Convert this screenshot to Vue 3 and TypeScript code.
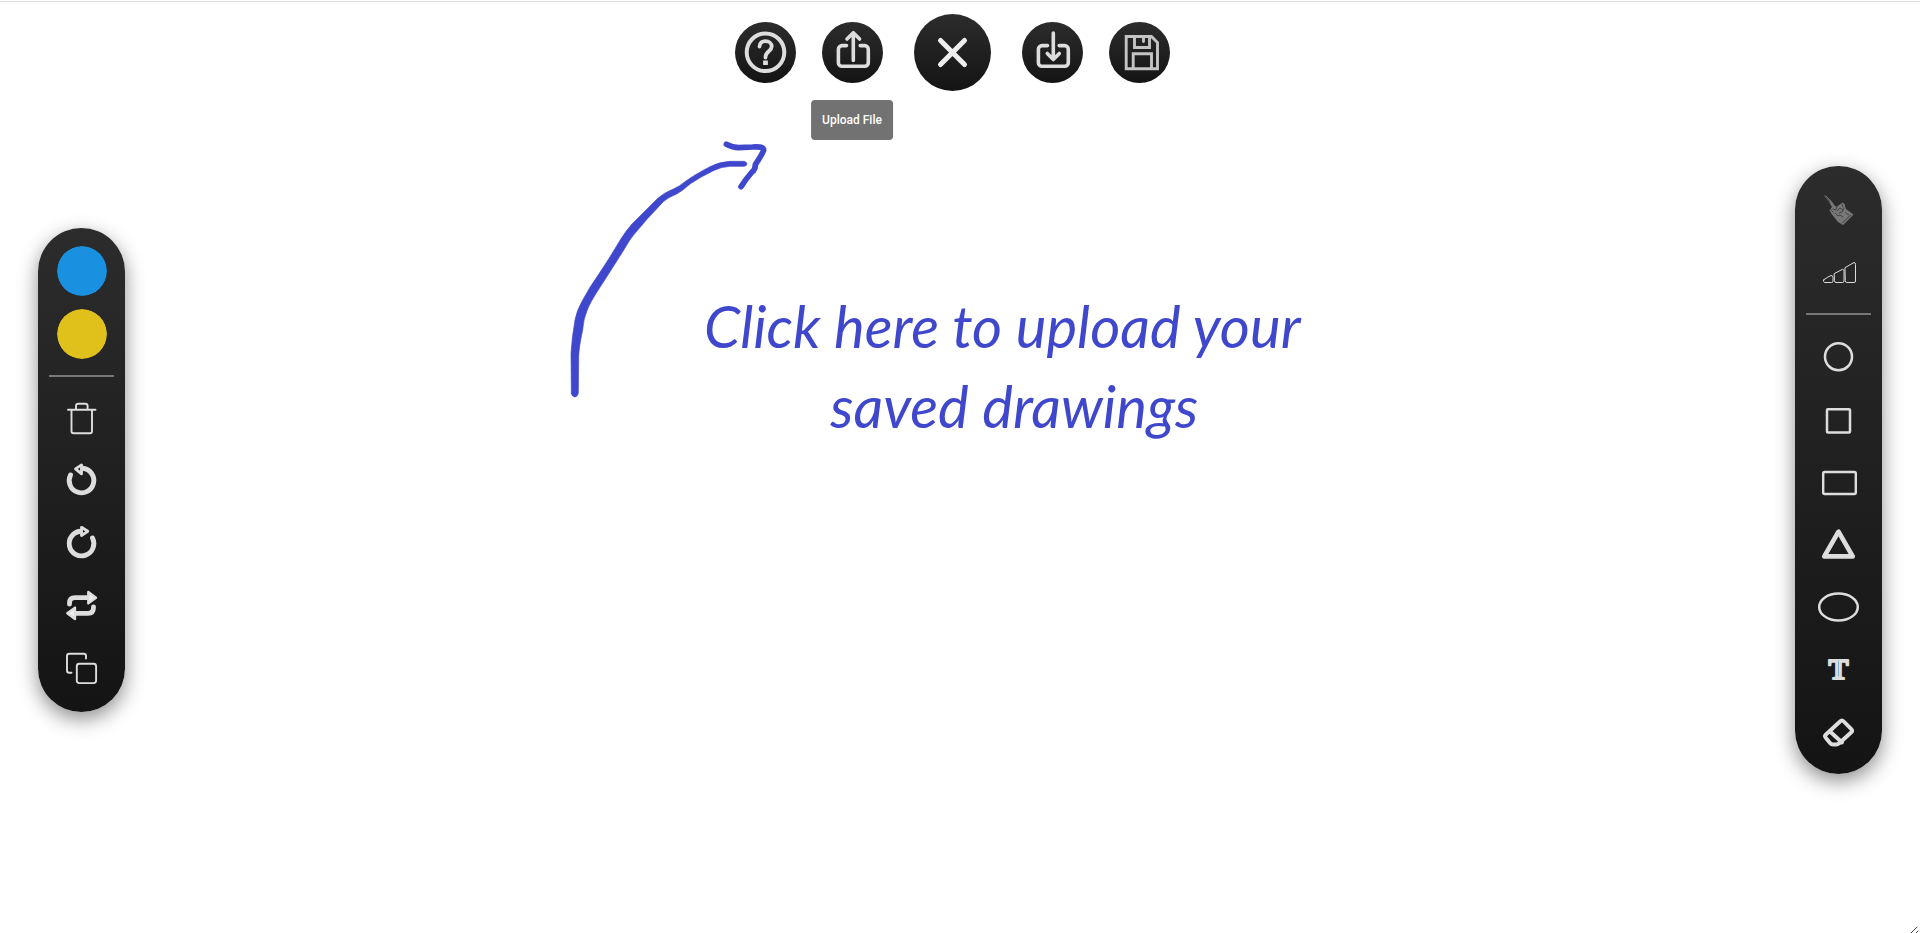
<script setup lang="ts">
import { ref } from 'vue'

const stroke = ref('#1a90e0')
const fill = ref('#e0c01a')
const selected = ref('upload')
</script>

<template>
  <main class="board">
    <svg class="arrow" viewBox="0 0 750 870" aria-hidden="true">
      <path class="ink" d="M64 820 L63 700 Q66 650 75 600 Q80 572 97 542 Q118 502 148 460 Q180 412 212 358 Q228 332 246 312 L322 236 Q340 219 372 206 Q390 198 405 185 Q430 166 480 140 Q510 125 540 124 L583 124 Q591 127 591 132 Q590 138 583 139 L540 139 Q515 140 490 152 Q450 171 420 192 Q400 211 380 222 Q355 232 340 245 Q290 296 250 346 Q240 358 225 384 Q190 440 150 502 Q118 550 110 575 Q101 595 98 630 Q87 680 86 710 L85 820 Q82 831 74 831 Q66 830 64 820Z" />
      <path class="ink-line" d="M529 73 Q548 83 566 83 L608 81 Q642 78 641 91 Q636 104 616 134 Q616 149 606 156 Q587 178 573 200" />
    </svg>
    <p class="hint"><span>Click here to upload your</span><span class="second">saved drawings</span></p>

    <nav class="top" aria-label="Drawing actions">
      <button class="round" aria-label="Help">
        <svg viewBox="0 0 61 61" stroke-width="4"><circle cx="30.5" cy="30.3" r="18.8" /><path d="M24.500 24.500c0-3.400 2.600-5.300 6-5.300s6.200 2 6.200 5.300c0 4.700-6.200 5-6.200 10.500v.5" stroke-width="3.800" /><path d="M30.500 38.500v4.500" stroke-width="4.800" stroke-linecap="butt" /></svg>
      </button>
      <div class="tip-anchor">
        <button class="round" aria-label="Upload" aria-describedby="upload-tip" @click="selected = 'upload'">
          <svg viewBox="0 0 61 61" stroke-width="3.600"><path d="M31.300 38.500V11M25 17l6.300-6.300L37.600 17M24.500 23.600H20a3.600 3.600 0 0 0-3.600 3.600v13.500a3.600 3.600 0 0 0 3.600 3.600h22.700a3.600 3.600 0 0 0 3.600-3.600V27.200a3.600 3.600 0 0 0-3.600-3.600h-4.500" /></svg>
        </button>
        <span v-if="selected === 'upload'" id="upload-tip" class="tip" role="tooltip">Upload File</span>
      </div>
      <button class="round large" aria-label="Close">
        <svg viewBox="0 0 77 77" stroke-width="5" class="bright"><path d="M26.500 26.500l24 24M50.500 26.500l-24 24" /></svg>
      </button>
      <button class="round" aria-label="Download">
        <svg viewBox="0 0 61 61" stroke-width="3.600"><path d="M31.300 11v26.500M25.300 31.500l6 6 6-6M25.500 23.600H20a3.600 3.600 0 0 0-3.600 3.600v13.500a3.600 3.600 0 0 0 3.600 3.600h22.700a3.600 3.600 0 0 0 3.600-3.600V27.200a3.600 3.600 0 0 0-3.600-3.600h-5.500" /></svg>
      </button>
      <button class="round" aria-label="Save">
        <svg viewBox="0 0 61 61" stroke-width="2.900" class="dim"><path d="M17.200 14.500h25.300l6 6v26.200H17.200zM25.500 14.500v11h15v-11M34.500 16v3.500M24.200 46V31.800h18.300V46" /></svg>
      </button>
    </nav>

    <aside class="pill left" aria-label="Colours and history">
      <div class="swatch"><input v-model="stroke" type="color" aria-label="Stroke colour" /></div>
      <div class="swatch next"><input v-model="fill" type="color" aria-label="Fill colour" /></div>
      <hr />
      <div class="tools">
        <button aria-label="Delete"><svg viewBox="0 0 65 50" stroke-width="1.900"><path d="M19 15.700h27.500M27 15v-3q0-2.300 2.300-2.300h7q2.300 0 2.300 2.300v3M22.500 16v21.200q0 2 2 2h16.500q2 0 2-2V16" /></svg></button>
        <button aria-label="Undo"><svg viewBox="0 0 65 50" stroke-width="4.900"><path d="M34 12.300A12.300 12.300 0 1 1 21.500 19" /><path d="M26.500 12.900l6-4v9z" stroke-width="2.800" /></svg></button>
        <button aria-label="Redo"><svg viewBox="0 0 65 50" stroke-width="4.900"><path d="M31.500 13.300A12.300 12.300 0 1 0 43.500 20" /><path d="M32.500 9.300l6.300 4-6.300 4.200z" stroke-width="2.800" /></svg></button>
        <button aria-label="Swap"><svg viewBox="0 0 65 50" stroke-width="4.800"><path d="M38 17.700H26q-5.500 0-5.500 5.500v1M27 33.300h12q5.500 0 5.500-5.500v-1" /><path class="solid" d="M39.300 12l7.700 5.700-7.700 5.700zM26 27.600v11.400l-7.700-5.700z" stroke-width="2.400" /></svg></button>
        <button aria-label="Duplicate"><svg viewBox="0 0 65 50" stroke-width="1.900"><rect x="27.800" y="21.800" width="19.300" height="19.300" rx="2.500" /><path d="M37 16.500V14q0-2.300-2.300-2.300H20.300Q18 11.700 18 14v14.500q0 2.300 2.300 2.300h2.200" /></svg></button>
      </div>
    </aside>

    <aside class="pill right" aria-label="Shapes">
      <button aria-label="Brush"><svg viewBox="0 0 65 50" stroke-width="1">
        <path class="hair-fill" d="M18 11.500l2 .2 5.500 5.300 3.500 5 2 .5 5.500-4 2 1.500 1.500 5 7.500 5.500-10.500 10.500-5-3-6-7.500-2.500-4 2.500-3.500-3-5z" />
        <path class="dark" d="M27 25l3 1 1-4M31 27l3-3 3 2M33 29l3-1 2-4M29 29l3 3 2-1 3 2M36 20l1 3M40 29l3 2M25 26l2 2M36 39l9-8M20 13l4 5" />
      </svg></button>
      <button class="next" aria-label="Line width"><svg viewBox="0 0 65 50" stroke-width="1"><path d="M17.500 33q4-3 7.500-4.500 2 0 2 2v3.500q0 1.500-1.500 1.500h-7q-1 0-1-2.500M28.500 26.500l8-4.200q1.500 0 1.500 2V34q0 1.500-1.500 1.500h-6.500q-1.500 0-1.500-1.500zM39.300 20.500l8.700-5q1.500 0 1.500 2V34q0 1.500-1.500 1.500h-7.200q-1.500 0-1.500-1.500z" /></svg></button>
      <hr />
      <div class="tools">
        <button aria-label="Circle"><svg viewBox="0 0 65 50" stroke-width="2.500"><circle cx="32.500" cy="24.700" r="13.500" /></svg></button>
        <button aria-label="Square"><svg viewBox="0 0 65 50" stroke-width="2.500"><rect x="21" y="15.300" width="23" height="23.300" rx="1" /></svg></button>
        <button aria-label="Rectangle"><svg viewBox="0 0 65 50" stroke-width="2.400"><rect x="17.200" y="16" width="32.600" height="22" rx="1.500" /></svg></button>
        <button aria-label="Triangle"><svg viewBox="0 0 65 50" stroke-width="4.700"><path d="M32.500 13.700L18.300 38.400h28.400z" /></svg></button>
        <button aria-label="Ellipse"><svg viewBox="0 0 65 50" stroke-width="2.500"><ellipse cx="32.500" cy="27" rx="19.300" ry="13.500" /></svg></button>
        <button aria-label="Text"><svg viewBox="0 0 65 50"><text x="32.500" y="37" text-anchor="middle">T</text><path class="blue" d="M32.500 19v15" stroke-width="1" /></svg></button>
        <button aria-label="Eraser"><svg viewBox="0 0 65 50" stroke-width="3.900"><path d="M34 17.500L19.700 30.700q-1.400 1.500 0 3l4.300 5.300q1.200 1.500 3.200 1.500h2.800q2 0 3.300-1.300L45.300 28.300q1.600-1.600 0-3.200l-7.500-7.600q-1.900-1.900-3.800 0zM24 27.500l12 11" /></svg></button>
      </div>
    </aside>

    <svg class="resizer" viewBox="0 0 9 7" aria-hidden="true"><path d="M1 7l6-6M6 7l2-2" /></svg>
  </main>
</template>

<style>
body { margin: 0; }
</style>

<style scoped>
.board {
  position: relative;
  min-height: 100vh;
  box-sizing: border-box;
  padding: 14px 38px;
  overflow: hidden;
  background: linear-gradient(#fff 1px, #ddd 1px, #ddd 2px, #fff 2px);
  font-family: Roboto, "Liberation Sans", sans-serif;
}
button { display: block; padding: 0; border: 0; background: none; cursor: pointer; }
svg { display: block; fill: none; stroke: #ddd; stroke-linecap: round; stroke-linejoin: round; }
.top {
  display: flex;
  align-items: center;
  justify-content: center;
  gap: 26px;
  margin-right: 16px;
}
.round {
  width: 61px;
  height: 61px;
  border-radius: 50%;
  background: linear-gradient(#2c2c2c, #141414);
}
.large { width: 77px; height: 77px; margin: 0 5px; }
.bright { stroke: #eee; }
.dim { stroke: #c4c4c4; stroke-linejoin: miter; }
.tip-anchor { position: relative; }
.tip {
  position: absolute;
  top: 78px;
  left: 50%;
  transform: translateX(-50%);
  padding: 0 11px;
  border-radius: 4px;
  background: #727272;
  color: #fff;
  font-size: 12px;
  font-weight: 500;
  line-height: 40px;
  white-space: nowrap;
}
.pill {
  position: absolute;
  top: 470px;
  transform: translateY(-50%);
  padding: 18px 11px 20px;
  border-radius: 44px;
  background: linear-gradient(#2c2c2c, #141414);
  box-shadow: 0 7px 20px rgba(0, 0, 0, 0.45);
}
.left { left: 38px; }
.right { right: 38px; }
.pill svg { width: 65px; height: 50px; }
.tools { display: grid; gap: 12px; }
.next { margin-top: 13px; }
hr { width: 65px; height: 2px; margin: 16px 0 17px; border: 0; background: #777; }
.swatch { padding: 0 7px 0 8px; }
.swatch input {
  display: block;
  width: 50px;
  height: 50px;
  padding: 0;
  border: 0;
  border-radius: 50%;
  overflow: hidden;
  background: none;
  appearance: none;
}
.swatch input::-webkit-color-swatch-wrapper { padding: 0; }
.swatch input::-webkit-color-swatch { border: 0; border-radius: 50%; }
.solid { fill: #eee; }
.hair-fill { fill: #777; stroke: none; }
.dark { stroke: #444; }
.blue { stroke: #7fb4d0; }
text { fill: #ddd; stroke: #ddd; stroke-width: 2; font: bold 30px "Liberation Serif", serif; }
.arrow { position: absolute; top: 120px; left: 550px; width: 250px; height: 290px; }
.ink { fill: #3f48cc; stroke: #3f48cc; stroke-width: 2; }
.ink-line { stroke: #3f48cc; stroke-width: 17; }
.hint {
  position: absolute;
  top: 286px;
  left: 704px;
  margin: 0;
  color: #3f48cc;
  font: italic 58px/80px "Segoe Print", Lato, sans-serif;
  text-align: center;
  white-space: nowrap;
}
.hint span { display: block; }
.second { padding-left: 24px; }
.resizer { position: absolute; right: 1px; bottom: 0; width: 9px; height: 7px; stroke: #444; }
</style>
